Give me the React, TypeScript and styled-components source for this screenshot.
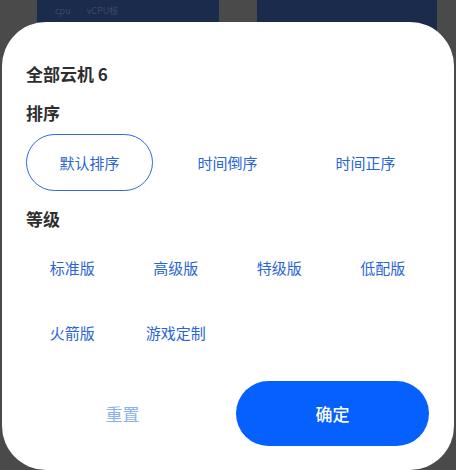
import React, { useState } from "react";
import styled, { createGlobalStyle } from "styled-components";

const Global = createGlobalStyle`
  html, body { margin: 0; padding: 0; }
  body {
    width: 456px;
    height: 470px;
    overflow: hidden;
    background: #4a4a4a;
    font-family: "Noto Sans CJK SC", "Noto Sans", "Liberation Sans", sans-serif;
  }
`;

const Page = styled.div`
  position: relative;
  width: 456px;
  height: 470px;
  overflow: hidden;
  background: #4a4a4a;
`;

const CardRow = styled.div`
  display: flex;
  gap: 38px;
  padding-left: 37px;
`;

const BackCard = styled.div<{ $w: number }>`
  width: ${(p) => p.$w}px;
  height: 60px;
  background: #1b2b4b;
  display: flex;
  align-items: flex-start;
  gap: 16px;
  padding: 5px 0 0 18px;
  box-sizing: border-box;
`;

const BackText = styled.span`
  font-size: 9px;
  line-height: 12px;
  color: #3b4967;
`;

const Sheet = styled.div`
  position: absolute;
  left: 2px;
  right: 2px;
  top: 22px;
  height: 448px;
  background: #ffffff;
  border-radius: 44px;
  box-sizing: border-box;
  padding: 40px 25px 0 24px;
  display: flex;
  flex-direction: column;
`;

const Title = styled.div`
  font-size: 17px;
  line-height: 24px;
  font-weight: 700;
  color: #2e2e2e;
`;

const Label = styled.div<{ $mt: number }>`
  margin-top: ${(p) => p.$mt}px;
  font-size: 17px;
  line-height: 24px;
  font-weight: 700;
  color: #2e2e2e;
`;

const OptionGrid = styled.div<{ $cols: number; $mt: number }>`
  margin-top: ${(p) => p.$mt}px;
  display: grid;
  grid-template-columns: repeat(${(p) => p.$cols}, 1fr);
  column-gap: 11px;
  row-gap: 8px;
`;

const Option = styled.button<{ $active: boolean }>`
  height: 57px;
  box-sizing: border-box;
  border: 1px solid ${(p) => (p.$active ? "#2d6be2" : "transparent")};
  border-radius: 29px;
  background: transparent;
  color: #2a64d8;
  font-family: inherit;
  font-size: 15px;
  line-height: 20px;
  padding: 0;
  display: flex;
  align-items: center;
  justify-content: center;
  cursor: pointer;
`;

const Footer = styled.div`
  margin-top: 20px;
  display: grid;
  grid-template-columns: 1fr 1fr;
  column-gap: 17px;
`;

const ResetButton = styled.button`
  height: 65px;
  border: none;
  background: transparent;
  color: #8db1ef;
  font-family: inherit;
  font-size: 17px;
  padding: 0;
  cursor: pointer;
`;

const ConfirmButton = styled.button`
  height: 65px;
  border: none;
  border-radius: 33px;
  background: #0560fe;
  color: #ffffff;
  font-family: inherit;
  font-size: 17px;
  font-weight: 500;
  padding: 0;
  cursor: pointer;
`;

const sorts = ["默认排序", "时间倒序", "时间正序"];
const grades = ["标准版", "高级版", "特级版", "低配版", "火箭版", "游戏定制"];

export default function App() {
  const [sort, setSort] = useState(0);
  const [grade, setGrade] = useState<number | null>(null);
  return (
    <Page>
      <Global />
      <CardRow>
        <BackCard $w={182}>
          <BackText>cpu</BackText>
          <BackText>vCPU核</BackText>
        </BackCard>
        <BackCard $w={180} />
      </CardRow>
      <Sheet>
        <Title>全部云机 6</Title>
        <Label $mt={15}>排序</Label>
        <OptionGrid $cols={3} $mt={9}>
          {sorts.map((s, i) => (
            <Option key={s} $active={sort === i} onClick={() => setSort(i)}>
              {s}
            </Option>
          ))}
        </OptionGrid>
        <Label $mt={16}>等级</Label>
        <OptionGrid $cols={4} $mt={8}>
          {grades.map((g, i) => (
            <Option key={g} $active={grade === i} onClick={() => setGrade(i)}>
              {g}
            </Option>
          ))}
        </OptionGrid>
        <Footer>
          <ResetButton onClick={() => { setSort(0); setGrade(null); }}>重置</ResetButton>
          <ConfirmButton>确定</ConfirmButton>
        </Footer>
      </Sheet>
    </Page>
  );
}
